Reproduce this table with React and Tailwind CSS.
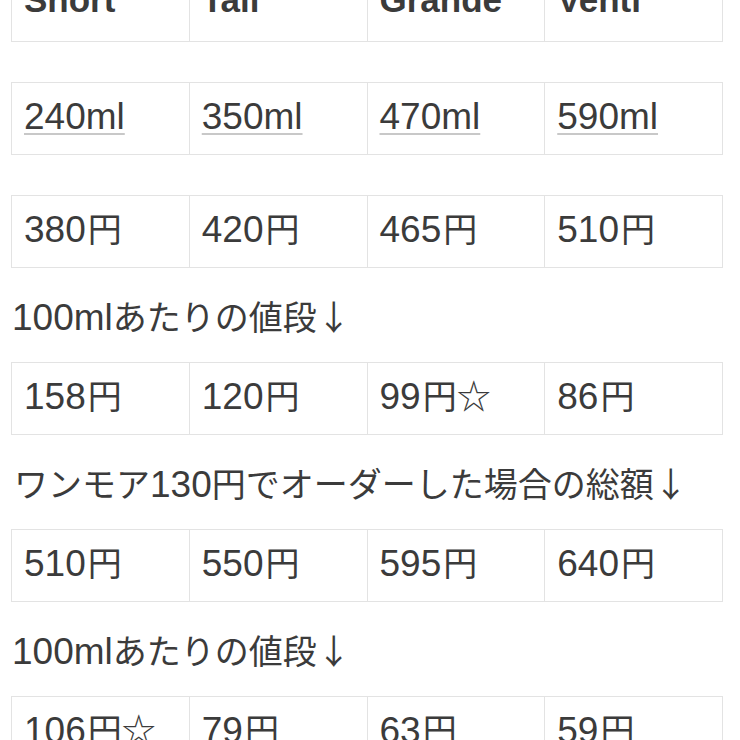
import React from "react";

const font = { fontFamily: '"Liberation Sans", "Noto Sans CJK JP", sans-serif' };
const cjk = { fontFamily: '"Noto Sans CJK JP", sans-serif' };

function Txt({ text }) {
  const parts = text.split(/([\x00-\x7F]+)/).filter((p) => p.length);
  return (
    <>
      {parts.map((p, i) => {
        if (/^[\x00-\x7F]+$/.test(p)) return <span key={i} className="text-[37px]">{p}</span>;
        if (p === "☆") return <span key={i} className="text-[27px]" style={cjk}>{p}</span>;
        if (p.endsWith("↓"))
          return (
            <span key={i}>
              {p.slice(0, -1)}
              <span style={cjk}>↓</span>
            </span>
          );
        return <span key={i} className="ml-[2px]">{p}</span>;
      })}
    </>
  );
}

function Row({ cells, bold, link, className = "" }) {
  return (
    <table className={`w-[712px] table-fixed border-collapse ${className}`}>
      <tbody>
        <tr>
          {cells.map((c, i) => (
            <td
              key={i}
              className={`h-[72px] border border-[#e3e3e3] px-[12px] align-middle text-[34px] leading-none text-[#3b3b3b] ${bold ? "pb-[12px] font-bold" : "pb-[5px]"}`}
            >
              {bold ? (
                <span className="text-[35px]">{c}</span>
              ) : link ? (
                <span className="underline decoration-[#c8c8c8] decoration-2 underline-offset-[4px]">
                  <Txt text={c} />
                </span>
              ) : (
                <Txt text={c} />
              )}
            </td>
          ))}
        </tr>
      </tbody>
    </table>
  );
}

function Heading({ text }) {
  return (
    <p className="-mt-[18px] mb-[18px] flex h-[54px] items-center pl-[1px] text-[34px] leading-none text-[#3b3b3b]">
      <span>
        <Txt text={text} />
      </span>
    </p>
  );
}

export default function App() {
  return (
    <div className="h-[740px] w-[740px] overflow-hidden bg-white" style={font}>
      <div className="-mt-[31px] pl-[11px]">
        <Row cells={["Short", "Tall", "Grande", "Venti"]} bold className="mb-[40px]" />
        <Row cells={["240ml", "350ml", "470ml", "590ml"]} link className="mb-[40px]" />
        <Row cells={["380円", "420円", "465円", "510円"]} className="mb-[40px]" />
        <Heading text="100mlあたりの値段↓" />
        <Row cells={["158円", "120円", "99円☆", "86円"]} className="mb-[40px]" />
        <Heading text="ワンモア130円でオーダーした場合の総額↓" />
        <Row cells={["510円", "550円", "595円", "640円"]} className="mb-[40px]" />
        <Heading text="100mlあたりの値段↓" />
        <Row cells={["106円☆", "79円", "63円", "59円"]} className="mb-[40px]" />
      </div>
    </div>
  );
}
